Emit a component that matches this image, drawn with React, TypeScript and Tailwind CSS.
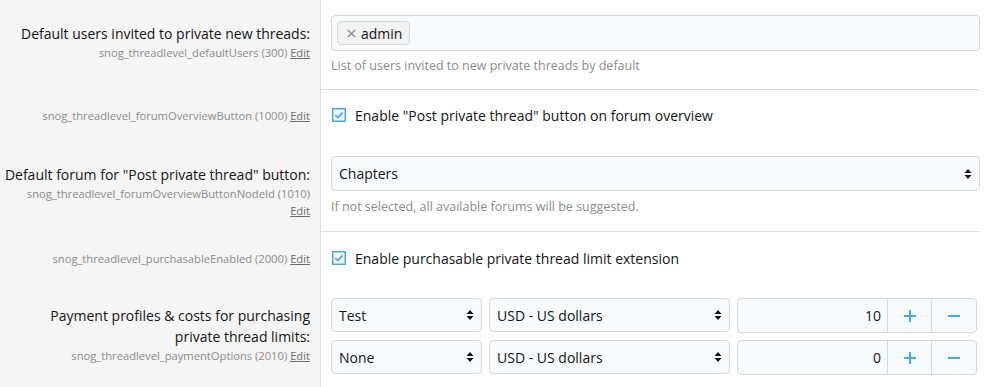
import React from "react";

const font = { fontFamily: '"Open Sans", "Noto Sans", sans-serif' };

function Arrows() {
  return (
    <svg width="8" height="12" viewBox="0 0 8 12" className="shrink-0">
      <path d="M4 1 L7.5 5 L0.5 5 Z" fill="#141414" />
      <path d="M4 11 L7.5 7 L0.5 7 Z" fill="#141414" />
    </svg>
  );
}

function Checkbox() {
  return (
    <svg width="14" height="14" viewBox="0 0 14 14" className="shrink-0">
      <rect x="0.75" y="0.75" width="12.5" height="12.5" fill="#f4f9fd" stroke="#47a7eb" strokeWidth="1.5" />
      <path d="M3.3 7.2 L5.8 9.6 L10.6 4.4" fill="none" stroke="#47a7eb" strokeWidth="1.6" />
    </svg>
  );
}

function Select({ value, className }: { value: string; className: string }) {
  return (
    <div
      className={`flex items-center justify-between border border-[#d8d8d8] bg-[#f8fbfe] rounded-[4px] pl-[7px] pr-[7px] text-[14px] text-[#141414] ${className}`}
    >
      <span>{value}</span>
      <Arrows />
    </div>
  );
}

function Label({
  title,
  option,
  top,
  breakEdit,
}: {
  title?: React.ReactNode;
  option: React.ReactNode;
  top: string;
  breakEdit?: boolean;
}) {
  return (
    <div className={`w-[321px] shrink-0 bg-[#f5f5f5] border-r border-[#dfdfdf] pr-[10px] text-right ${top}`}>
      {title && <div className="text-[14px] leading-[21px] text-[#141414]">{title}</div>}
      <div className="text-[11.2px] leading-[17px] text-[#8c8c8c]">
        {option}
        {breakEdit ? <br /> : " "}
        <span className="underline text-[#6e6e6e]">Edit</span>
      </div>
    </div>
  );
}

function Stepper({ value }: { value: string }) {
  return (
    <div className="flex flex-1 h-[35px] border border-[#d8d8d8] bg-[#f8fbfe] rounded-[4px] text-[14px] text-[#141414]">
      <div className="flex-1 flex items-center justify-end pr-[6px]">{value}</div>
      <div className="w-[44px] flex items-center justify-center border-l border-[#d8d8d8]">
        <svg width="12" height="12" viewBox="0 0 12 12">
          <path d="M6 0 V12 M0 6 H12" stroke="#47a7eb" strokeWidth="2" />
        </svg>
      </div>
      <div className="w-[45px] flex items-center justify-center border-l border-[#d8d8d8]">
        <svg width="12" height="12" viewBox="0 0 12 12">
          <path d="M0 6 H12" stroke="#47a7eb" strokeWidth="2" />
        </svg>
      </div>
    </div>
  );
}

export default function App() {
  return (
    <div className="w-[988px] h-[387px] overflow-hidden bg-white" style={font}>
      {/* default users */}
      <div className="flex">
        <Label
          top="pt-[23px]"
          title="Default users invited to private new threads:"
          option="snog_threadlevel_defaultUsers (300)"
        />
        <div className="flex-1 pr-[8px]">
          <div className="pt-[15px] pb-[14px] border-b border-[#dfdfdf] pl-[10px]">
            <div className="h-[36px] border border-[#d8d8d8] bg-[#f8fbfe] rounded-[4px] flex items-center pl-[5px]">
              <div className="h-[24px] flex items-center gap-[4px] border border-[#d8d8d8] bg-[#f2f2f2] rounded-[4px] pl-[8px] pr-[7px] text-[14px] text-[#141414]">
                <span className="text-[#8c8c8c] text-[19px] leading-none">×</span>
                <span>admin</span>
              </div>
            </div>
            <div className="mt-[6px] text-[12.5px] leading-[18px] text-[#8c8c8c]">
              List of users invited to new private threads by default
            </div>
          </div>
        </div>
      </div>

      {/* overview button */}
      <div className="flex">
        <Label top="pt-[17px]" option="snog_threadlevel_forumOverviewButton (1000)" />
        <div className="flex-1 pl-[11px] pr-[8px] pt-[15px] pb-[16px]">
          <div className="flex items-center gap-[9px] h-[20px] text-[14px] text-[#141414]">
            <Checkbox />
            <span>Enable "Post private thread" button on forum overview</span>
          </div>
        </div>
      </div>

      {/* default forum */}
      <div className="flex">
        <Label
          top="pt-[23px]"
          title='Default forum for "Post private thread" button:'
          option="snog_threadlevel_forumOverviewButtonNodeId (1010)"
          breakEdit
        />
        <div className="flex-1 pr-[8px]">
          <div className="pt-[15px] pb-[15px] border-b border-[#dfdfdf] pl-[10px]">
            <Select value="Chapters" className="h-[35px]" />
            <div className="mt-[7px] text-[12.5px] leading-[18px] text-[#8c8c8c]">
              If not selected, all available forums will be suggested.
            </div>
          </div>
        </div>
      </div>

      {/* purchasable */}
      <div className="flex">
        <Label top="pt-[18px]" option="snog_threadlevel_purchasableEnabled (2000)" />
        <div className="flex-1 pl-[11px] pr-[8px] pt-[16px] pb-[15px]">
          <div className="flex items-center gap-[9px] h-[20px] text-[14px] text-[#141414]">
            <Checkbox />
            <span>Enable purchasable private thread limit extension</span>
          </div>
        </div>
      </div>

      {/* payment options */}
      <div className="flex">
        <Label
          top="pt-[22px] pb-[30px]"
          title={
            <>
              Payment profiles &amp; costs for purchasing
              <br />
              private thread limits:
            </>
          }
          option="snog_threadlevel_paymentOptions (2010)"
        />
        <div className="flex-1 pl-[10px] pr-[11px] pt-[15px] flex flex-col gap-[7px]">
          {[
            ["Test", "10"],
            ["None", "0"],
          ].map(([profile, cost]) => (
            <div key={profile} className="flex gap-[7px]">
              <Select value={profile} className="w-[151px] h-[34px]" />
              <Select value="USD - US dollars" className="w-[241px] h-[34px]" />
              <Stepper value={cost} />
            </div>
          ))}
        </div>
      </div>
    </div>
  );
}
